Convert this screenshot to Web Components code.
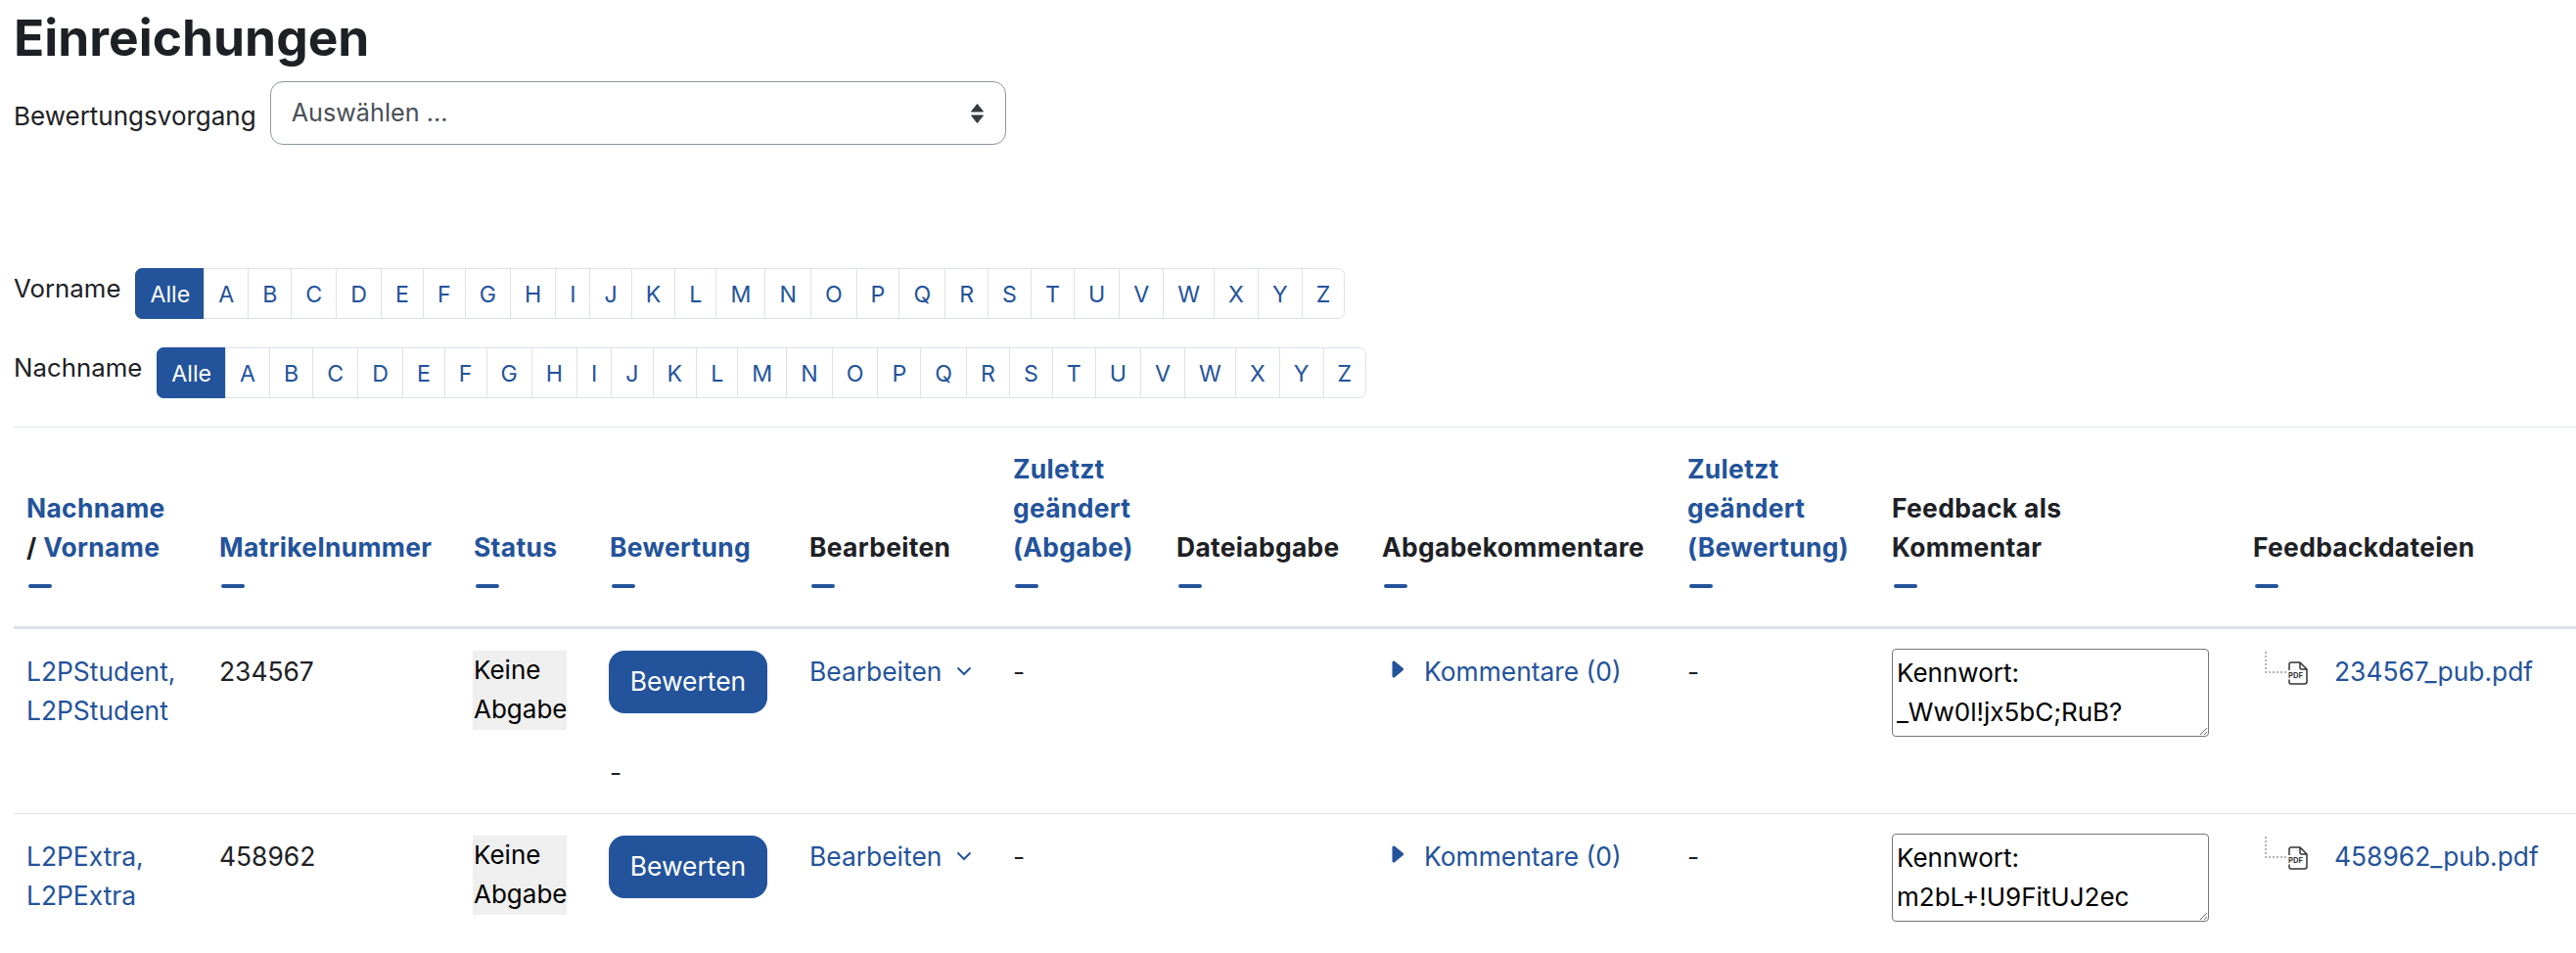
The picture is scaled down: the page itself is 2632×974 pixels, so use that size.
<!DOCTYPE html>
<html lang="de">
<head>
<meta charset="utf-8">
<title>Einreichungen</title>
<style>
  html, body {
    margin: 0;
    height: 974px;
    overflow: hidden;
    background: #fff;
    color: #1d2125;
    font-family: Inter, "Liberation Sans", sans-serif;
    font-size: 26.4px;
  }
  main {
    padding-left: 14px;
  }
</style>
</head>
<body>
<main>
  <page-title>Einreichungen</page-title>
  <grading-select label="Bewertungsvorgang" placeholder="Auswählen ..."></grading-select>
  <initials-bar label="Vorname" style="margin-top:126px"></initials-bar>
  <initials-bar label="Nachname" style="margin-top:29px"></initials-bar>
  <submissions-table></submissions-table>
</main>

<script>
const BLUE = "#23539b";

class PageTitle extends HTMLElement {
  constructor() {
    super();
    this.attachShadow({ mode: "open" }).innerHTML = `
<style>
:host { display: block; height: 83px; }
h2 {
    margin: 0;
    padding-top: 7px;
    font-size: 51.5px;
    line-height: 62px;
    font-weight: 700;
    color: #1d2125;
}
</style>
<h2><slot></slot></h2>`;
  }
}
customElements.define("page-title", PageTitle);

class GradingSelect extends HTMLElement {
  constructor() {
    super();
    this.attachShadow({ mode: "open" }).innerHTML = `
<style>
:host { display: flex; align-items: center; gap: 14px; height: 65px; }
label { font-size: 26px; line-height: 40px; margin-top: 7px; }
.wrap { position: relative; width: 752px; height: 65px; }
select {
    appearance: none;
    width: 100%;
    height: 100%;
    box-sizing: border-box;
    border: 1.5px solid #8f959e;
    border-radius: 13px;
    background: #fff;
    padding: 0 40px 2px 21px;
    font: 25.2px Inter, "Liberation Sans", sans-serif;
    color: #495057;
}
svg { position: absolute; right: 22px; top: 22px; }
</style>
<label></label>
<div class="wrap">
  <select><option></option></select>
  <svg width="15" height="22" viewBox="0 0 15 22"><path d="M7.5 1.5 L13.5 9 H1.5 Z M7.5 20.5 L1.5 13 H13.5 Z" fill="#343a40" stroke="#343a40" stroke-linejoin="round"/></svg>
</div>`;
  }

  connectedCallback() {
    this.shadowRoot.querySelector("label").textContent = this.getAttribute("label");
    this.shadowRoot.querySelector("option").textContent = this.getAttribute("placeholder");
  }
}
customElements.define("grading-select", GradingSelect);

class InitialsBar extends HTMLElement {
  constructor() {
    super();
    this.attachShadow({ mode: "open" }).innerHTML = `
<style>
:host { display: flex; align-items: flex-start; gap: 15px; height: 52px; }
.label { font-size: 25.8px; line-height: 40px; margin-top: 1px; }
ul {
    display: flex;
    list-style: none;
    margin: 0;
    padding: 0;
    font-size: 23.2px;
    line-height: 48px;
}
li {
    padding: 2px 14px 0;
    border: 1px solid #dee2e6;
    margin-left: -1px;
    color: ${BLUE};
    background: #fff;
}
li:first-child {
    margin-left: 0;
    background: ${BLUE};
    border-color: ${BLUE};
    color: #fff;
    border-radius: 7px 0 0 7px;
}
li:last-child { border-radius: 0 7px 7px 0; }
</style>
<div class="label"></div>
<ul></ul>`;
  }

  connectedCallback() {
    this.shadowRoot.querySelector(".label").textContent = this.getAttribute("label");
    const list = this.shadowRoot.querySelector("ul");
    ["Alle", ..."ABCDEFGHIJKLMNOPQRSTUVWXYZ"].forEach((letter) => {
      const item = document.createElement("li");
      item.textContent = letter;
      list.appendChild(item);
    });
  }
}
customElements.define("initials-bar", InitialsBar);

class FeedbackFile extends HTMLElement {
  constructor() {
    super();
    this.attachShadow({ mode: "open" }).innerHTML = `
<style>
:host { display: flex; align-items: flex-start; padding-left: 12px; }
.tree { margin-top: 0; flex: none; }
.pdf { margin: 10px 0 0 2px; flex: none; }
a { margin-left: 27px; color: ${BLUE}; line-height: 40px; white-space: nowrap; }
</style>
<svg class="tree" width="22" height="22" viewBox="0 0 22 22">
  <path d="M1 0 V21 H22" fill="none" stroke="#b4b4b4" stroke-width="2" stroke-dasharray="2 2"/>
</svg>
<svg class="pdf" width="20" height="24" viewBox="0 0 20 24">
  <path d="M3 1 H12 L19 8 V20.5 Q19 23 16.5 23 H3 Q1 23 1 21 V18.5 M1 9 V3 Q1 1 3 1 M12 1 V6.5 Q12 8 13.5 8 H19" fill="none" stroke="#333" stroke-width="1.5" stroke-linejoin="round"/>
  <text x="0" y="16.5" font-family="Inter, sans-serif" font-size="7.6" font-weight="700" fill="#333">PDF</text>
</svg>
<a><slot></slot></a>`;
  }
}
customElements.define("feedback-file", FeedbackFile);

const tableTemplate = document.createElement("template");
tableTemplate.innerHTML = `
<style>
:host { display: block; margin-top: 29px; }
table {
    table-layout: fixed;
    width: 2634px;
    border-collapse: separate;
    border-spacing: 0;
    border-top: 1px solid #dee2e6;
    line-height: 40px;
}
th {
    vertical-align: bottom;
    text-align: left;
    font-weight: 700;
    letter-spacing: 0.33px;
    padding: 22px 14px 22px;
    border-bottom: 3px solid #dee2e6;
}
td {
    vertical-align: top;
    padding: 23px 14px 22px;
    border-bottom: 1px solid #e5e5e5;
}
th:first-child, td:first-child { padding-left: 13px; }
a { color: ${BLUE}; text-decoration: none; }
.dash { display: flex; align-items: center; height: 39px; }
.dash i { display: block; width: 24px; height: 4px; margin-left: 2px; border-radius: 2px; background: ${BLUE}; }
.status { display: inline-block; background: #efefef; color: #000; font-size: 26px; line-height: 40px; padding: 0 1px; margin: -1px 0 0 -1px; width: 94px; height: 81px; vertical-align: top; }
.grade {
    display: block;
    width: 162px;
    height: 64px;
    margin: -1px 0 0 -1px;
    border-radius: 16px;
    background: ${BLUE};
    color: #fff;
    text-align: center;
    line-height: 62px;
}
.after-grade { margin-top: 40px; }
.edit { display: flex; align-items: center; gap: 15px; white-space: nowrap; }
.comments { display: flex; align-items: center; white-space: nowrap; }
.comments svg { margin: -4px 21px 0 10px; flex: none; }
textarea {
    display: block;
    box-sizing: border-box;
    width: 324px;
    height: 90px;
    margin-top: -3px;
    padding: 4px 3px 2px 4px;
    border: 1.5px solid #767676;
    border-radius: 4px;
    font: 26px/40px Inter, "Liberation Sans", sans-serif;
    color: #000;
    background: #fff;
    resize: both;
    overflow: hidden;
}
</style>
<table>
  <colgroup>
    <col style="width:196px"><col style="width:260px"><col style="width:139px"><col style="width:204px">
    <col style="width:208px"><col style="width:167px"><col style="width:210px"><col style="width:312px">
    <col style="width:209px"><col style="width:369px"><col style="width:360px">
  </colgroup>
  <thead>
    <tr>
      <th><a>Nachname</a><br>/ <a>Vorname</a><span class="dash"><i></i></span></th>
      <th><a>Matrikelnummer</a><span class="dash"><i></i></span></th>
      <th><a>Status</a><span class="dash"><i></i></span></th>
      <th><a>Bewertung</a><span class="dash"><i></i></span></th>
      <th>Bearbeiten<span class="dash"><i></i></span></th>
      <th><a>Zuletzt geändert (Abgabe)</a><span class="dash"><i></i></span></th>
      <th>Dateiabgabe<span class="dash"><i></i></span></th>
      <th>Abgabekommentare<span class="dash"><i></i></span></th>
      <th><a>Zuletzt geändert (Bewertung)</a><span class="dash"><i></i></span></th>
      <th>Feedback als<br>Kommentar<span class="dash"><i></i></span></th>
      <th>Feedbackdateien<span class="dash"><i></i></span></th>
    </tr>
  </thead>
  <tbody></tbody>
</table>`;

class SubmissionsTable extends HTMLElement {
  constructor() {
    super();
    this.attachShadow({ mode: "open" }).append(tableTemplate.content.cloneNode(true));
  }

  connectedCallback() {
    const submissions = [
      { name: "L2PStudent", id: "234567", secret: "_Ww0l!jx5bC;RuB?" },
      { name: "L2PExtra", id: "458962", secret: "m2bL+!U9FitUJ2ec" },
    ];
    const body = this.shadowRoot.querySelector("tbody");
    submissions.forEach((row) => {
      const tr = document.createElement("tr");
      tr.innerHTML = `
<td><a>${row.name},<br>${row.name}</a></td>
<td>${row.id}</td>
<td><span class="status">Keine Abgabe</span></td>
<td><a class="grade">Bewerten</a><div class="after-grade">-</div></td>
<td><a class="edit">Bearbeiten
  <svg width="16" height="10" viewBox="0 0 16 10"><path d="M1.5 1.5 L8 8 L14.5 1.5" fill="none" stroke="${BLUE}" stroke-width="2"/></svg></a></td>
<td>-</td>
<td></td>
<td><a class="comments"><svg width="12" height="18" viewBox="0 0 12 18"><path d="M2 2 L10.5 9 L2 16 Z" fill="${BLUE}" stroke="${BLUE}" stroke-width="3" stroke-linejoin="round"/></svg>Kommentare (0)</a></td>
<td>-</td>
<td><textarea spellcheck="false">Kennwort:
${row.secret}</textarea></td>
<td><feedback-file>${row.id}_pub.pdf</feedback-file></td>`;
      body.appendChild(tr);
    });
  }
}
customElements.define("submissions-table", SubmissionsTable);
</script>
</body>
</html>
